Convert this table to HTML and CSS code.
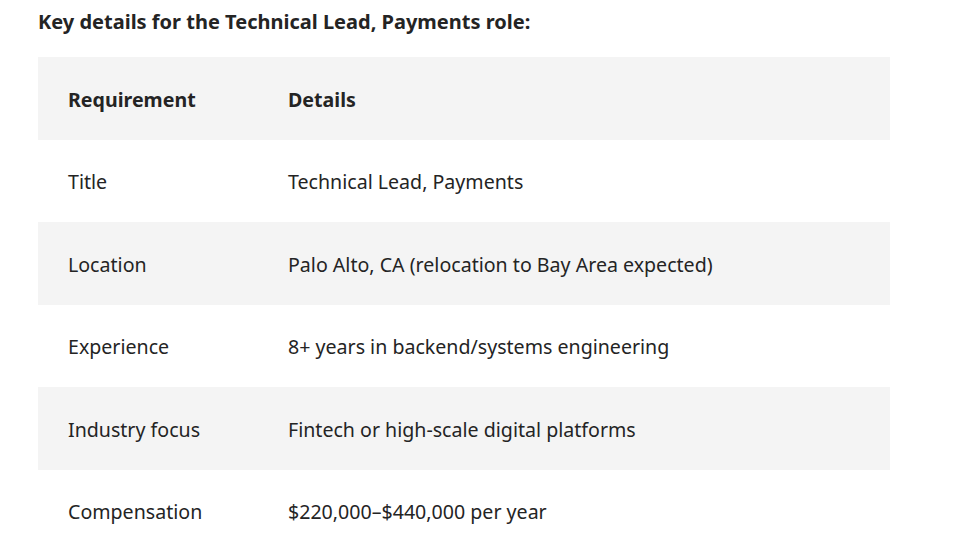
FILE: index.html
```html
<!DOCTYPE html>
<html lang="en">
<head>
<meta charset="utf-8">
<title>Technical Lead, Payments</title>
<link rel="stylesheet" href="styles.css">
</head>
<body>
<main class="content">
  <p class="intro">Key details for the Technical Lead, Payments role:</p>
  <table class="details">
    <thead>
      <tr><th>Requirement</th><th>Details</th></tr>
    </thead>
    <tbody>
      <tr><td>Title</td><td>Technical Lead, Payments</td></tr>
      <tr><td>Location</td><td>Palo Alto, CA (relocation to Bay Area expected)</td></tr>
      <tr><td>Experience</td><td>8+ years in backend/systems engineering</td></tr>
      <tr><td>Industry focus</td><td>Fintech or high-scale digital platforms</td></tr>
      <tr><td>Compensation</td><td>$220,000–$440,000 per year</td></tr>
    </tbody>
  </table>
</main>
</body>
</html>
```
FILE: styles.css
```css
html, body {
  margin: 0;
  padding: 0;
  background: #ffffff;
}
body {
  font-family: "Noto Sans", "Open Sans", sans-serif;
  color: #242424;
}
.content {
  padding: 8px 0 0 38px;
}
.intro {
  margin: 0 0 21px 0;
  font-size: 20px;
  line-height: 28px;
  font-weight: 700;
}
.details {
  width: 852px;
  border-collapse: collapse;
  font-size: 19.6px;
}
.details th,
.details td {
  text-align: left;
  padding: 29.5px 30px 26.5px 30px;
  line-height: 26.5px;
  vertical-align: middle;
}
.details th {
  font-weight: 700;
}
.details td:first-child,
.details th:first-child {
  width: 190px;
}
.details td:last-child,
.details th:last-child {
  padding-left: 0;
}
.details thead tr,
.details tbody tr:nth-child(even) {
  background: #f4f4f4;
}
```
